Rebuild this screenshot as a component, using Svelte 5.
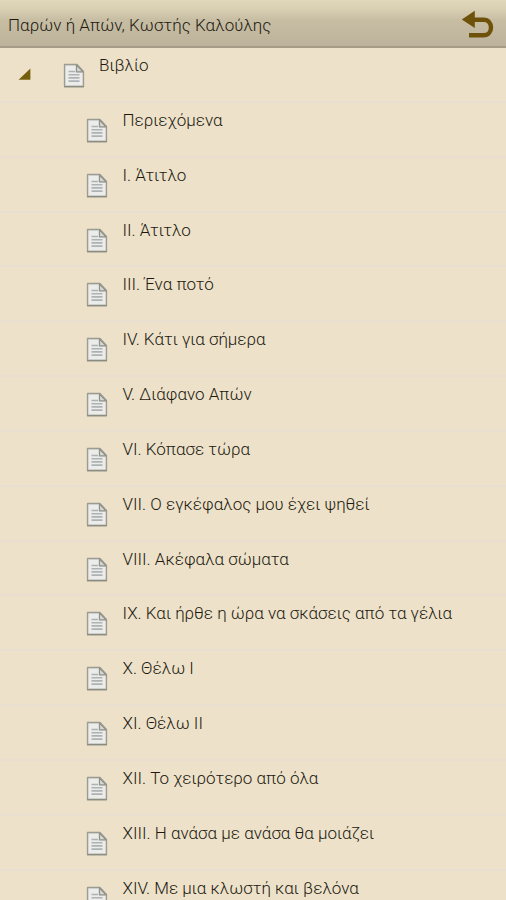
<script>
    let expanded = true;

    const bookTitle = "Παρών ή Απών, Κωστής Καλούλης";

    const chapters = [
        "Περιεχόμενα",
        "I. Άτιτλο",
        "II. Άτιτλο",
        "III. Ένα ποτό",
        "IV. Κάτι για σήμερα",
        "V. Διάφανο Απών",
        "VI. Κόπασε τώρα",
        "VII. Ο εγκέφαλος μου έχει ψηθεί",
        "VIII. Ακέφαλα σώματα",
        "IX. Και ήρθε η ώρα να σκάσεις από τα γέλια",
        "X. Θέλω I",
        "XI. Θέλω II",
        "XII. Το χειρότερο από όλα",
        "XIII. Η ανάσα με ανάσα θα μοιάζει",
        "XIV. Με μια κλωστή και βελόνα"
    ];
</script>

{#snippet pageIcon()}
    <svg class="page" width="22" height="25" viewBox="0 0 22 25" aria-hidden="true">
        <path d="M1.5 1.5H14L20.5 8.5V23.5H1.5Z" fill="#dfe0db" stroke="#9c9c92" stroke-width="1.3" stroke-linejoin="round" />
        <path d="M3 3H12.5V10H19V22H3Z" fill="#ecedea" />
        <path d="M1 23.7H21" stroke="#8b8b80" stroke-width="1.2" />
        <path d="M13.5 2V8.8H20Z" fill="#d6d8d5" stroke="#909189" stroke-width="1.2" stroke-linejoin="round" />
        <path d="M5.5 8.5H12M5.5 11.7H16.5M5.5 14.9H16.5M5.5 18.1H16.5" stroke="#adb2b4" stroke-width="1.6" />
    </svg>
{/snippet}

<div class="screen">
    <header>
        <h1>{bookTitle}</h1>
        <button class="back" aria-label="Πίσω">
            <svg width="34" height="30" viewBox="0 0 34 30">
                <path d="M13 9.7H23.5C33.5 9.7 33.5 25.3 23.5 25.3H9" fill="none" stroke="#6e5209" stroke-width="4.4" />
                <path d="M1.8 9.4L14.8 0.8V18Z" fill="#6e5209" />
            </svg>
        </button>
    </header>

    <div class="row root">
        <button class="toggle" aria-label="Βιβλίο" onclick={() => (expanded = !expanded)}>
            <svg width="13" height="12" viewBox="0 0 13 12">
                <path d="M0.6 11.8L12.4 0.6V11.8Z" fill="#74600c" />
            </svg>
        </button>
        {@render pageIcon()}
        <span>Βιβλίο</span>
    </div>

    {#if expanded}
        {#each chapters as chapter}
            <div class="row chapter">
                {@render pageIcon()}
                <span>{chapter}</span>
            </div>
        {/each}
    {/if}
</div>

<style>
    :global(body) {
        background: #ede1c9;
    }

    .screen {
        height: 900px;
        overflow: hidden;
        background: #ede1c9;
        color: #211910;
        font-family: Roboto, "Noto Sans", sans-serif;
        font-size: 17px;
        font-weight: 300;
    }

    header {
        display: flex;
        justify-content: space-between;
        box-sizing: border-box;
        height: 48px;
        padding: 0 12px 0 8px;
        border-bottom: 2px solid #a79c86;
        background: linear-gradient(#e0d7bb 0, #d9d0b4 9px, #c7bda3 20px, #bdb39c 46px);
    }

    h1 {
        margin: 0;
        padding-top: 14px;
        font-size: 17px;
        font-weight: 300;
        line-height: 22px;
        letter-spacing: 0.04px;
    }

    button {
        padding: 0;
        border: 0;
        background: none;
    }

    .back {
        display: flex;
        padding-top: 10px;
    }

    .row {
        display: flex;
        box-sizing: border-box;
        height: 54.85px;
        border-bottom: 2px solid #e9dfd0;
    }

    .row span {
        padding-top: 6px;
        line-height: 22px;
        white-space: nowrap;
    }

    .page {
        flex: none;
        margin-top: 15px;
    }

    .root {
        padding-left: 18px;
    }

    .root span {
        padding-left: 14px;
    }

    .toggle {
        display: flex;
        width: 45px;
        padding-top: 20px;
    }

    .chapter {
        padding-left: 86px;
    }

    .chapter span {
        padding-left: 14.5px;
    }
</style>
